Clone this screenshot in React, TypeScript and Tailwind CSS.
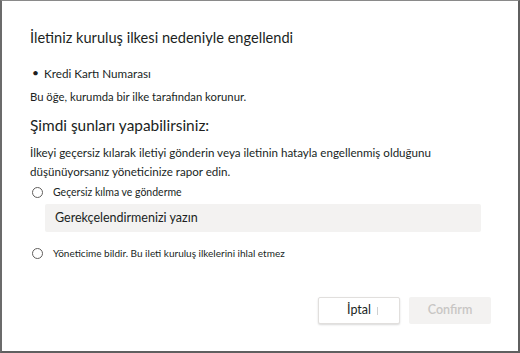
export default function App() {
  return (
    <div
      className="w-[520px] h-[353px] bg-white border-l-2 border-r-2 border-b-2 border-t border-l-[#6b6b6b] border-r-[#5f5f5f] border-b-[#5f5f5f] border-t-[#8a8a8a] text-[#201f1e] flex flex-col"
      style={{ fontFamily: 'Lato, "Liberation Sans", Arial, sans-serif' }}
    >
      <div className="pl-[28px] pr-[27px] pt-[28px] flex flex-col flex-1">
        <h1 className="text-[14.6px] leading-[18px] font-normal">İletiniz kuruluş ilkesi nedeniyle engellendi</h1>

        <div className="mt-[18px] flex items-center text-[11.7px] leading-[16px]">
          <span className="w-[14px] pl-[2px] text-[12px]">•</span>
          <span>Kredi Kartı Numarası</span>
        </div>
        <p className="mt-[8px] text-[11.3px] leading-[16px]">Bu öğe, kurumda bir ilke tarafından korunur.</p>

        <h2 className="mt-[9px] text-[15.4px] leading-[22px] font-normal">Şimdi şunları yapabilirsiniz:</h2>
        <p className="mt-[7px] text-[11.6px] leading-[19px] w-[420px]">
          İlkeyi geçersiz kılarak iletiyi gönderin veya iletinin hatayla engellenmiş olduğunu düşünüyorsanız yöneticinize rapor edin.
        </p>

        <label className="mt-[4px] flex items-center gap-[10px] text-[10.5px] leading-[14px]">
          <span className="w-[11px] h-[11px] rounded-full border border-[#605e5c] bg-white ml-[2px]" />
          <span>Geçersiz kılma ve gönderme</span>
        </label>
        <div className="mt-[5px] ml-[15px] mr-[10px] h-[28px] rounded-[2px] bg-[#f3f2f1] flex items-center px-[10px] text-[12.5px]">
          Gerekçelendirmenizi yazın
        </div>

        <label className="mt-[14px] flex items-center gap-[10px] text-[10px] leading-[14px]">
          <span className="w-[11px] h-[11px] rounded-full border border-[#605e5c] bg-white ml-[2px]" />
          <span>Yöneticime bildir. Bu ileti kuruluş ilkelerini ihlal etmez</span>
        </label>

        <div className="mt-auto mb-[27px] flex justify-end gap-[9px]">
          <button className="relative w-[82px] h-[27px] bg-white border border-[#e1dfdd] rounded-[2px] shadow-[0_1px_2px_rgba(0,0,0,0.15)] text-[12.5px] text-[#201f1e]">
            İptal
            <span className="absolute left-[58px] top-[9px] w-px h-[8px] bg-[#d0d0d0]" />
          </button>
          <button className="w-[82px] h-[27px] bg-[#f3f2f1] rounded-[2px] text-[12.5px] font-semibold text-[#c8c6c4]">
            Confirm
          </button>
        </div>
      </div>
    </div>
  );
}
